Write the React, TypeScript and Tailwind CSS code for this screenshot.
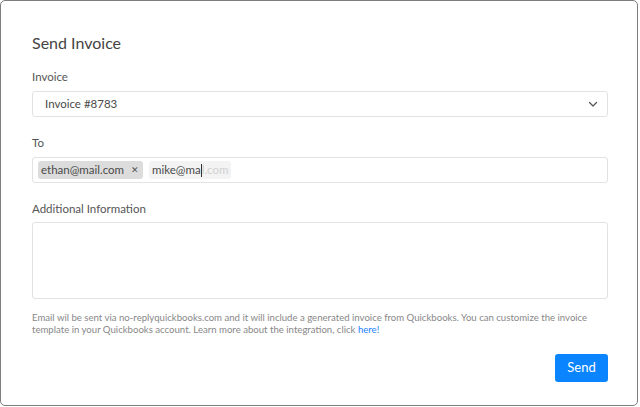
import React from 'react';

export default function App() {
  return (
    <div className="w-[640px] h-[407px] bg-white" style={{ fontFamily: 'Lato, "Noto Sans", sans-serif' }}>
      <div className="w-[638px] h-[406px] border border-[#7d7d7d] rounded-[5px] pl-[31px] pr-[29px] pt-[31px] text-[#444]">
        {/* Title */}
        <h1 className="text-[16px] leading-[22px] text-[#444]">Send Invoice</h1>

        {/* Invoice select */}
        <div className="mt-[15px] text-[11.5px] leading-[16px] text-[#555]">Invoice</div>
        <div className="mt-[6px] h-[26px] flex items-center justify-between border border-[#e2e2e2] rounded-[3px] pl-[12px] pr-[8px] text-[11.5px] text-[#4a4a4a]">
          <span>Invoice #8783</span>
          <svg className="w-[12px] h-[12px] text-[#555]" viewBox="0 0 24 24" fill="none" stroke="currentColor" strokeWidth={2.5} strokeLinecap="round" strokeLinejoin="round">
            <path d="M5 9l7 7 7-7" />
          </svg>
        </div>

        {/* To */}
        <div className="mt-[18px] text-[11.5px] leading-[16px] text-[#555]">To</div>
        <div className="mt-[6px] h-[26px] flex items-center gap-[6px] border border-[#e2e2e2] rounded-[3px] px-[5px] text-[11.5px]">
          <span className="h-[18px] flex items-center gap-[7px] bg-[#dcdcdc] rounded-[3px] pl-[3px] pr-[4px] text-[#4a4a4a]">
            ethan@mail.com
            <span className="text-[9px] text-[#555]">✕</span>
          </span>
          <span className="h-[18px] flex items-center bg-[#f3f3f3] rounded-[3px] pl-[3px] pr-[3px] text-[#4a4a4a]">
            mike@ma
            <span className="w-px h-[13px] bg-[#333]" />
            <span className="text-[#d0d0d0]">l.com</span>
          </span>
        </div>

        {/* Additional info */}
        <div className="mt-[18px] text-[11.5px] leading-[16px] text-[#555]">Additional Information</div>
        <div className="mt-[5px] h-[77px] border border-[#e2e2e2] rounded-[3px]" />

        {/* Helper */}
        <p className="mt-[13px] text-[9.6px] leading-[12px] text-[#888]">
          Email wil be sent via no-replyquickbooks.com and it will include a generated invoice from Quickbooks. You can customize the invoice template in your Quickbooks account. Learn more about the integration, click <a className="text-[#1a82ff]">here!</a>
        </p>

        {/* Send */}
        <div className="mt-[18px] flex justify-end">
          <button className="w-[53px] h-[28px] bg-[#0a84ff] rounded-[3px] text-white text-[13px]">Send</button>
        </div>
      </div>
    </div>
  );
}
